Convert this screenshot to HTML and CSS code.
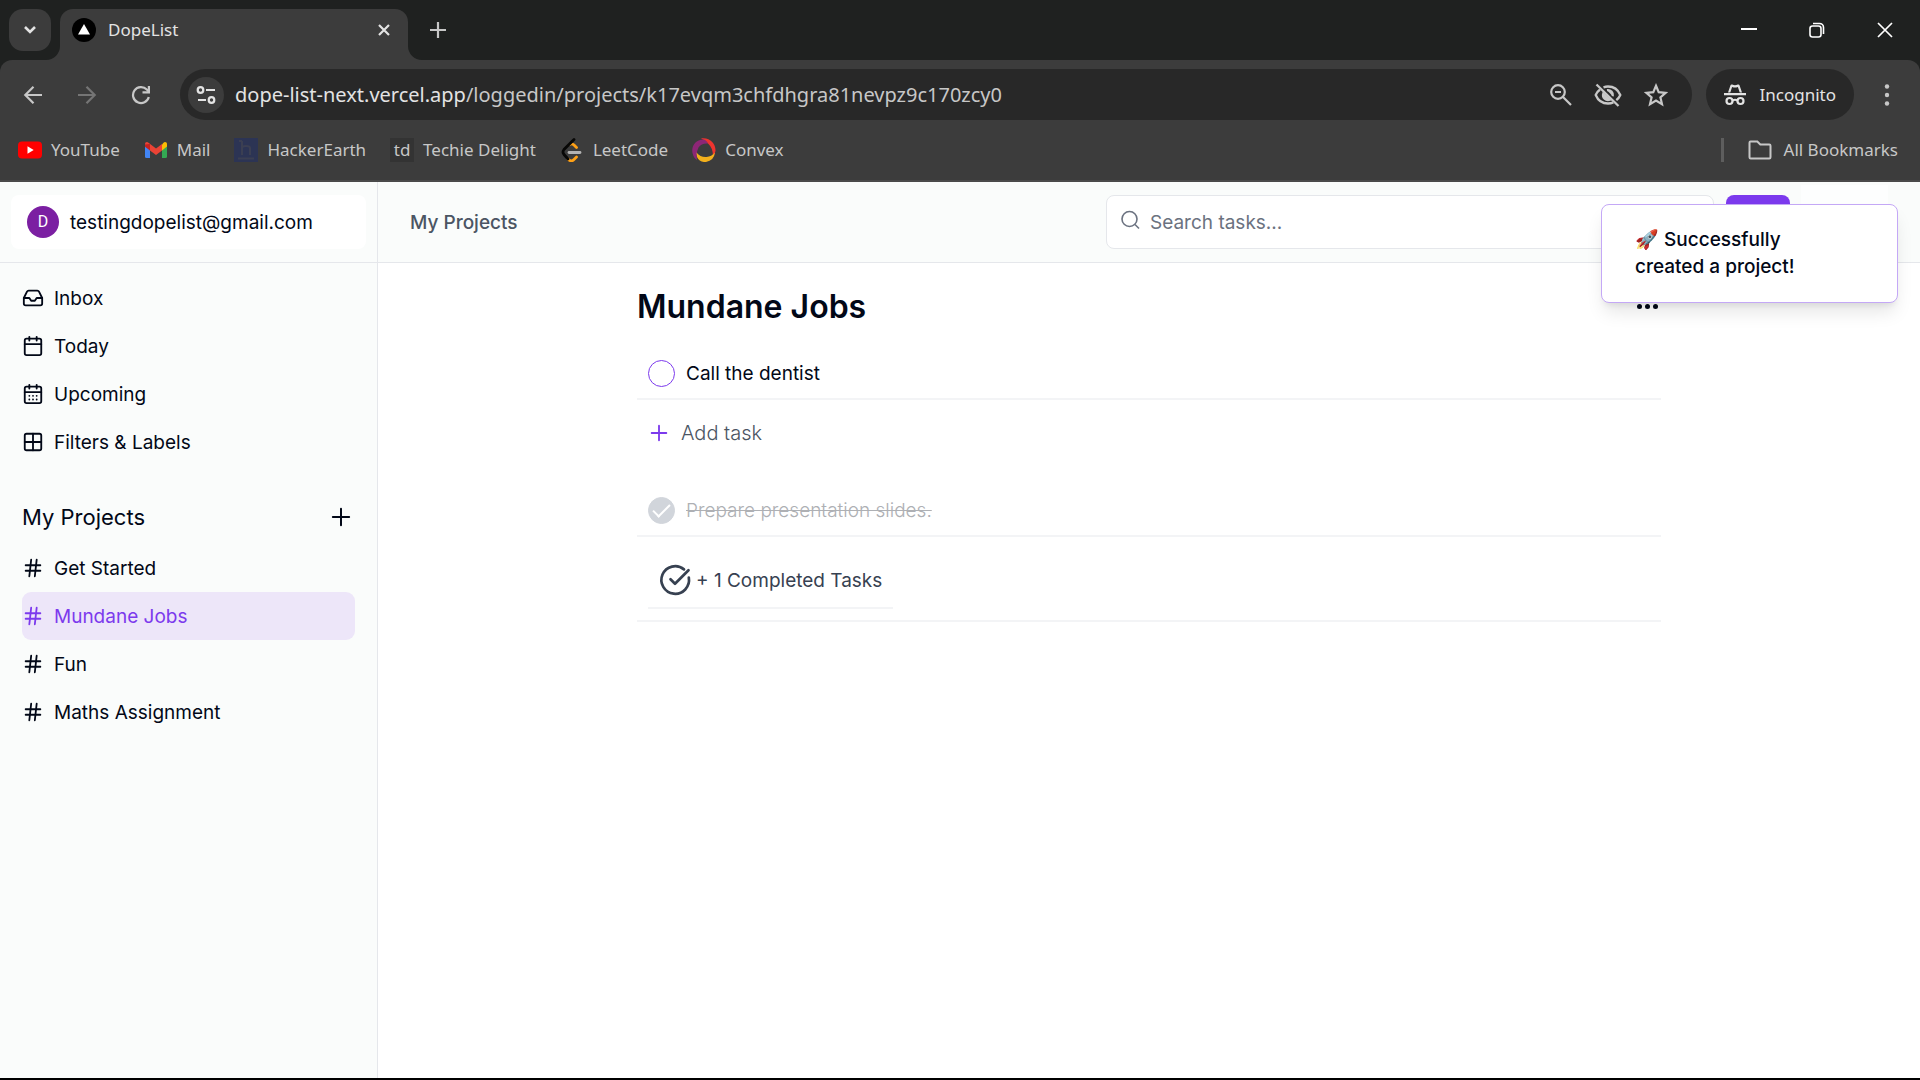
FILE: index.html
```html
<!DOCTYPE html>
<html lang="en">
<head>
<meta charset="utf-8">
<title>DopeList</title>
<link rel="stylesheet" href="styles.css">
</head>
<body>
<header class="browser">
  <div class="tabstrip">
    <button class="tab-search" aria-label="Search tabs"><svg width="14" height="10" viewBox="0 0 14 10"><path d="M2 2l5 5 5-5" fill="none" stroke="#e3e3e3" stroke-width="2.6"/></svg></button>
    <div class="tab">
      <svg class="flare" width="14" height="14" viewBox="0 0 14 14"><path d="M14 0v14H0A14 14 0 0 0 14 0z" fill="#3c3c3c"/></svg>
      <svg width="24" height="24" viewBox="0 0 24 24"><circle cx="12" cy="12" r="12" fill="#000"/><path d="M12 6l6 10.500H6z" fill="#fff"/></svg>
      <span class="tab-title">DopeList</span>
      <button class="plain" aria-label="Close tab"><svg width="14" height="14" viewBox="0 0 14 14"><path d="M2 2l10 10M12 2L2 12" stroke="#e3e3e3" stroke-width="2.200"/></svg></button>
      <svg class="flare flare-right" width="14" height="14" viewBox="0 0 14 14"><path d="M0 0v14h14A14 14 0 0 1 0 0z" fill="#3c3c3c"/></svg>
    </div>
    <button class="plain new-tab" aria-label="New tab"><svg width="16" height="16" viewBox="0 0 16 16"><path d="M8 0v16M0 8h16" stroke="#c7c7c7" stroke-width="2.200"/></svg></button>
    <div class="window-controls">
      <button class="plain" aria-label="Minimize"><svg width="16" height="16" viewBox="0 0 16 16"><path d="M0 7h16" stroke="#fff" stroke-width="2"/></svg></button>
      <button class="plain" aria-label="Restore"><svg width="16" height="16" viewBox="0 0 16 16" fill="none" stroke="#fff" stroke-width="1.600"><rect x="1" y="4" width="11" height="11" rx="2.500"/><path d="M4 1.500h6.500a4 4 0 0 1 4 4V12"/></svg></button>
      <button class="plain" aria-label="Close"><svg width="16" height="16" viewBox="0 0 16 16"><path d="M1 1l14 14M15 1L1 15" stroke="#fff" stroke-width="1.700"/></svg></button>
    </div>
  </div>
  <div class="toolbar">
    <button class="plain" aria-label="Back"><svg width="20" height="20" viewBox="0 0 20 20"><path d="M19 10H2.500M10.500 1.800L2.300 10l8.200 8.200" fill="none" stroke="#c7c7c7" stroke-width="2.200"/></svg></button>
    <button class="plain" aria-label="Forward"><svg width="20" height="20" viewBox="0 0 20 20"><path d="M1 10h16.500M9.500 1.800l8.200 8.200-8.200 8.200" fill="none" stroke="#757575" stroke-width="2.200"/></svg></button>
    <button class="plain" aria-label="Reload"><svg width="20" height="20" viewBox="0 0 20 20"><path d="M17.800 12A8 8 0 1 1 15.800 4.500L18 6.700" fill="none" stroke="#c7c7c7" stroke-width="2.200"/><path d="M19 1v7.500h-7.500v-2.200h5.300V1z" fill="#c7c7c7"/></svg></button>
    <div class="omnibox">
      <button class="site-info" aria-label="Site information"><svg width="20" height="20" viewBox="0 0 20 20" fill="none" stroke="#e3e3e3" stroke-width="2.200"><circle cx="4.500" cy="5" r="2.800"/><path d="M10 5h9M2 15h8"/><circle cx="15.500" cy="15" r="2.800"/></svg></button>
      <span class="url">dope-list-next.vercel.app<span class="path">/loggedin/projects/k17evqm3chfdhgra81nevpz9c170zcy0</span></span>
      <button class="plain" aria-label="Zoom"><svg width="22" height="22" viewBox="0 0 22 22" fill="none" stroke="#c7c7c7" stroke-width="2.200"><circle cx="8" cy="8" r="6.800"/><path d="M13 13l8 8M5 8h6"/></svg></button>
      <button class="plain" aria-label="Third-party cookies blocked"><svg width="28" height="24" viewBox="0 0 28 24" fill="none" stroke="#c7c7c7" stroke-width="2.300"><path d="M9.500 4.300A13 13 0 0 1 14 3.500C19.600 3.500 24 6.500 26.300 12a13 13 0 0 1-4 5.200M6 6.500A13 13 0 0 0 1.700 12C4 17.500 8.400 20.500 14 20.500c2 0 3.800-.4 5.400-1.100"/><path d="M13 7.200a5 5 0 0 1 5.800 6M9.300 10.500a5 5 0 0 0 6.500 6.200z" fill="#c7c7c7"/><path d="M2.500 1.500L24.500 23"/></svg></button>
      <button class="plain" aria-label="Bookmark this tab"><svg width="24" height="24" viewBox="0 0 24 24"><path d="M12 2.800l2.700 6.400 6.900.6-5.200 4.500 1.600 6.800-6-3.600-6 3.600 1.600-6.800-5.200-4.500 6.900-.6z" fill="none" stroke="#c7c7c7" stroke-width="2.200"/></svg></button>
    </div>
    <button class="incognito"><svg width="22" height="22" viewBox="0 0 22 22"><path d="M0 9h22v2.300H0zM4 8.500L6.500 1.200Q7 0 8.300.6 11 1.800 13.700.6 15 0 15.500 1.200L18 8.500h-2.300L13.900 3Q11 4 8.100 3L6.300 8.500z" fill="#e3e3e3"/><g fill="none" stroke="#e3e3e3" stroke-width="2.200"><circle cx="5.500" cy="17" r="3"/><circle cx="16.500" cy="17" r="3"/><path d="M8.500 16.500q2.500-1.500 5 0"/></g></svg>Incognito</button>
    <button class="plain" aria-label="Menu"><svg width="6" height="22" viewBox="0 0 6 22" fill="#c7c7c7"><circle cx="3" cy="2.500" r="2.200"/><circle cx="3" cy="11" r="2.200"/><circle cx="3" cy="19.500" r="2.200"/></svg></button>
  </div>
  <nav class="bookmarks" aria-label="Bookmarks">
    <a href="#"><svg width="24" height="24" viewBox="0 0 24 24"><rect y="3.500" width="24" height="17" rx="4" fill="#f00"/><path d="M9.500 8.200v7.600l6.200-3.800z" fill="#fff"/></svg>YouTube</a>
    <a href="#"><svg width="24" height="24" viewBox="0 0 24 24"><path d="M1 6v12.500q0 1.500 1.500 1.500H6V9z" fill="#4285f4"/><path d="M23 6v12.500q0 1.500-1.500 1.500H18V9z" fill="#34a853"/><path d="M18 6.500l1.500-1.700C21 3.400 23 4.300 23 6.300V8.500l-5 4z" fill="#fbbc04"/><path d="M1 6.300c0-2 2-2.900 3.500-1.500L12 10.500l6-4.500v6.500l-6 4.500-6-4.500z" fill="#ea4335"/><path d="M1 6.500V8.700l5 3.800V6z" fill="#c5221f"/></svg>Mail</a>
    <a href="#"><svg width="24" height="24" viewBox="0 0 24 24"><rect width="24" height="24" fill="#2c3454"/><path d="M8 3v14M8 10q0-2 4-2t4 2v7M4 20.500h16M5 3h3" fill="none" stroke="#3b3f52" stroke-width="2"/></svg>HackerEarth</a>
    <a href="#"><span class="td-logo" aria-hidden="true">td</span>Techie Delight</a>
    <a href="#"><svg width="24" height="24" viewBox="0 0 24 24" fill="none" stroke-width="2.800" stroke-linecap="round"><path d="M10 6.500q2-1.500 4 .5l2.500 2.500M8 21q3 3.500 6 .5l2.500-2.500" stroke="#ffa116"/><path d="M14 1.500L4 11.500q-2 2.500 0 5l4 4.500" stroke="#070706"/><path d="M9 14.500h11" stroke="#b3b3b3"/></svg>LeetCode</a>
    <a href="#"><svg width="24" height="24" viewBox="0 0 24 24"><path d="M9 .5C18 -1 24 6 23.500 13q-.5 3-2.500 5 0-8-5-12.500Q13 2 9 .5z" fill="#ee342f"/><path d="M12 1.500C4 1 -1 8 .5 15q1 5 4.500 7-1-8 1.500-12.500Q9.500 5 16 5.500 14.500 2.500 12 1.500z" fill="#8d2676"/><path d="M4.500 14.500q4 5 10 4.500 5-.5 8.500-4.500-1 8-9 9.500-6.500.5-9-5z" fill="#f3b01c"/></svg>Convex</a>
    <a href="#" class="all-bookmarks"><svg width="24" height="24" viewBox="0 0 24 24"><path d="M2.500 3.500h6.800l3 3h9q1.200 0 1.200 1.200v11.600q0 1.200-1.200 1.200H2.700q-1.200 0-1.200-1.200V4.700q0-1.200 1-1.200z" fill="none" stroke="#c7c7c7" stroke-width="2"/></svg>All Bookmarks</a>
  </nav>
</header>

<div class="app">
  <aside class="sidebar">
    <div class="account">
      <a href="#" class="profile"><span class="avatar">D</span>testingdopelist@gmail.com</a>
    </div>
    <nav class="menu" aria-label="Tasks">
      <a href="#"><svg class="ico" viewBox="0 0 24 24"><path d="M22 12h-6l-2 3h-4l-2-3H2"/><path d="M5.450 5.110L2 12v6a2 2 0 0 0 2 2h16a2 2 0 0 0 2-2v-6l-3.450-6.890A2 2 0 0 0 16.760 4H7.240a2 2 0 0 0-1.790 1.110z"/></svg>Inbox</a>
      <a href="#"><svg class="ico" viewBox="0 0 24 24"><path d="M8 2v4M16 2v4M3 10h18"/><rect x="3" y="4" width="18" height="18" rx="2"/></svg>Today</a>
      <a href="#"><svg class="ico" viewBox="0 0 24 24"><path d="M8 2v4M16 2v4M3 10h18M8 14h.01M12 14h.01M16 14h.01M8 18h.01M12 18h.01M16 18h.01"/><rect x="3" y="4" width="18" height="18" rx="2"/></svg>Upcoming</a>
      <a href="#"><svg class="ico" viewBox="0 0 24 24"><path d="M12 3v18M3 12h18"/><rect x="3" y="3" width="18" height="18" rx="2"/></svg>Filters &amp; Labels</a>
    </nav>
    <div class="projects-head">
      <h2>My Projects</h2>
      <button class="plain" aria-label="Add project"><svg class="ico ico-add" viewBox="0 0 24 24"><path d="M5 12h14M12 5v14"/></svg></button>
    </div>
    <nav class="menu" aria-label="My projects">
      <a href="#"><svg class="ico" viewBox="0 0 24 24"><path d="M4 9h16M4 15h16M10 3L8 21M16 3l-2 18"/></svg>Get Started</a>
      <a href="#" class="active" aria-current="page"><svg class="ico" viewBox="0 0 24 24"><path d="M4 9h16M4 15h16M10 3L8 21M16 3l-2 18"/></svg>Mundane Jobs</a>
      <a href="#"><svg class="ico" viewBox="0 0 24 24"><path d="M4 9h16M4 15h16M10 3L8 21M16 3l-2 18"/></svg>Fun</a>
      <a href="#"><svg class="ico" viewBox="0 0 24 24"><path d="M4 9h16M4 15h16M10 3L8 21M16 3l-2 18"/></svg>Maths Assignment</a>
    </nav>
  </aside>

  <div class="content">
    <div class="topbar">
      <a href="#" class="crumb">My Projects</a>
      <label class="search">
        <svg width="20" height="24" viewBox="0 0 20 24" fill="none" stroke="#6b7280" stroke-width="1.600"><circle cx="8.500" cy="9" r="7.500"/><path d="M14 14.500L18 18.500"/></svg>
        <input type="search" placeholder="Search tasks..." aria-label="Search tasks">
      </label>
      <button class="ai-button" aria-label="Search"></button>
      <button class="user-button" aria-label="Account"></button>
    </div>
    <main class="project">
      <div class="project-head">
        <h1>Mundane Jobs</h1>
        <button class="plain" aria-label="Project options"><svg width="27" height="27" viewBox="0 0 27 27" fill="#020817"><circle cx="5.500" cy="12.500" r="2.500"/><circle cx="13.500" cy="12.500" r="2.500"/><circle cx="21.500" cy="12.500" r="2.500"/></svg></button>
      </div>
      <label class="task"><input type="checkbox">Call the dentist</label>
      <button class="add-task"><svg width="22" height="22" viewBox="0 0 24 24"><path d="M4 12h16M12 4v16" stroke="#7c3aed" stroke-width="2" stroke-linecap="round"/></svg>Add task</button>
      <label class="task done"><input type="checkbox" checked><s>Prepare presentation slides.</s></label>
      <div class="completed">
        <button><svg width="36" height="36" viewBox="0 0 24 24" fill="none" stroke="#374151" stroke-width="1.800" stroke-linecap="round" stroke-linejoin="round"><path d="M18 4.900a9.200 9.200 0 1 0 3.200 5.500"/><path d="M9 11.500l3 3L21 5.500"/></svg>+ 1 Completed Tasks</button>
      </div>
    </main>
  </div>
  <div class="toast" role="status">🚀 Successfully<br>created a project!</div>
</div>
</body>
</html>
```
FILE: styles.css
```css
* {
  box-sizing: border-box;
}

body {
  margin: 0;
  min-height: 100vh;
  display: flex;
  flex-direction: column;
  border-bottom: 2px solid #000;
  background: #fff;
  color: #020817;
  font: 19px/27px Inter, "Liberation Sans", sans-serif;
}

a {
  color: inherit;
  text-decoration: none;
}

button {
  padding: 0;
  border: 0;
  background: none;
  color: inherit;
  font: inherit;
  display: flex;
  align-items: center;
  justify-content: center;
}

svg {
  display: block;
  flex: none;
}

/* Browser window */
.browser {
  background: #1f2120;
  color: #c7c7c7;
  font: 17px/24px "Noto Sans", "Open Sans", sans-serif;
  border-bottom: 2px solid #4a4a4a;
}

.tabstrip {
  height: 60px;
  display: flex;
  align-items: center;
  padding: 0 27px 0 9px;
}

.tab-search {
  width: 42px;
  height: 42px;
  border-radius: 14px;
  background: #3c3c3c;
}

.tab {
  position: relative;
  align-self: flex-end;
  width: 348px;
  height: 51px;
  margin-left: 9px;
  padding: 0 17px 9px 12px;
  display: flex;
  align-items: center;
  gap: 12px;
  border-radius: 13px 13px 0 0;
  background: #3c3c3c;
  color: #e3e3e3;
}

.tab-title {
  flex: 1;
}

.flare {
  position: absolute;
  left: -14px;
  bottom: 0;
}

.flare-right {
  left: auto;
  right: -14px;
}

.new-tab {
  margin-left: 22px;
}

.window-controls {
  margin-left: auto;
  display: flex;
  gap: 52px;
}

.toolbar {
  height: 69px;
  display: flex;
  align-items: center;
  gap: 34px;
  padding: 0 30px 0 23px;
  border-radius: 12px 12px 0 0;
  background: #3c3c3c;
}

.omnibox {
  flex: 1;
  height: 51px;
  margin: 0 -20px 0 -5px;
  padding: 0 24px 0 8px;
  display: flex;
  align-items: center;
  gap: 22px;
  border-radius: 26px;
  background: #282828;
}

.site-info {
  width: 36px;
  height: 36px;
  margin-right: -11px;
  border-radius: 50%;
  background: #3c3c3c;
}

.url {
  flex: 1;
  font-size: 20px;
  color: #e3e3e3;
}

.path {
  color: #c7c7c7;
}

.incognito {
  height: 51px;
  margin-right: -4px;
  padding: 0 18px;
  gap: 14px;
  border-radius: 26px;
  background: #282828;
  color: #e3e3e3;
}

.bookmarks {
  height: 51px;
  padding: 0 22px 9px 18px;
  display: flex;
  align-items: center;
  gap: 24px;
  background: #3c3c3c;
}

.bookmarks a {
  display: flex;
  align-items: center;
  gap: 9px;
}

.bookmarks .all-bookmarks {
  height: 24px;
  margin-left: auto;
  padding-left: 24px;
  gap: 12px;
  border-left: 3px solid #5e5e5e;
}

.td-logo {
  width: 24px;
  height: 24px;
  background: #333;
  color: #c7c7c7;
  text-align: center;
}

/* Application */
.app {
  position: relative;
  flex: 1;
  display: flex;
}

.sidebar {
  width: 378px;
  flex: none;
  border-right: 1px solid #e5e7eb;
  background: #fafcfb;
}

.account {
  height: 81px;
  padding: 13px 11px;
  border-bottom: 1px solid #e5e7eb;
}

.profile {
  height: 54px;
  padding: 0 16px;
  display: flex;
  align-items: center;
  gap: 11px;
  border-radius: 8px;
  background: #fff;
}

.avatar {
  width: 32px;
  height: 32px;
  border-radius: 50%;
  background: #7b1fa2;
  color: #fff;
  font: 16px/32px Roboto, sans-serif;
  text-align: center;
}

.menu {
  padding: 11px 22px;
}

.menu a {
  height: 48px;
  display: flex;
  align-items: center;
  gap: 10px;
  border-radius: 9px;
}

.menu .active {
  background: #ede6f9;
  color: #7c3aed;
}

.ico {
  width: 22px;
  height: 22px;
  fill: none;
  stroke: currentColor;
  stroke-width: 2;
  stroke-linecap: round;
  stroke-linejoin: round;
}

.ico-add {
  width: 28px;
  height: 28px;
  stroke-width: 1.7;
}

.projects-head {
  display: flex;
  align-items: center;
  justify-content: space-between;
  padding: 26px 22px 2px;
}

h2 {
  margin: 0;
  font-size: 22px;
  font-weight: 400;
  line-height: 28px;
}

.content {
  flex: 1;
}

.topbar {
  height: 81px;
  padding: 0 32px;
  display: flex;
  align-items: center;
  border-bottom: 1px solid #e5e7eb;
  background: #fafcfb;
}

.crumb {
  color: #4b5563;
  font-weight: 500;
}

.search {
  width: 608px;
  height: 54px;
  margin-left: auto;
  padding-left: 14px;
  display: flex;
  align-items: center;
  gap: 9px;
  border: 1px solid #e5e7eb;
  border-radius: 8px;
  background: #fff;
}

.search input {
  flex: 1;
  padding: 0;
  border: 0;
  outline: 0;
  background: none;
  font: inherit;
}

.search input::placeholder {
  color: #6b7280;
}

.ai-button {
  width: 64px;
  height: 54px;
  margin: 0 11px 0 12px;
  border-radius: 8px;
  background: #7c3aed;
}

.user-button {
  width: 87px;
  height: 74px;
  background: #fdfefe;
}

.project {
  max-width: 1024px;
  margin: 0 auto;
  padding-top: 22px;
}

.project-head {
  display: flex;
  align-items: center;
  justify-content: space-between;
}

h1 {
  margin: 0;
  font-size: 32px;
  line-height: 44px;
  font-weight: 600;
}

.task {
  height: 52px;
  margin-top: 19px;
  padding: 0 11px;
  display: flex;
  align-items: center;
  gap: 11px;
  border-bottom: 2px solid #f3f4f6;
}

.task input {
  appearance: none;
  width: 27px;
  height: 27px;
  margin: 0;
  display: grid;
  place-items: center;
  border: 1px solid #7c3aed;
  border-radius: 50%;
}

.task input:checked {
  border-color: #d1d5db;
  background: #d1d5db;
}

.task input:checked::after {
  content: "";
  width: 15px;
  height: 7px;
  border: solid #fff;
  border-width: 0 0 2px 2px;
  transform: translateY(-2px) rotate(-45deg);
}

.add-task {
  margin-top: 19px;
  padding-left: 11px;
  gap: 11px;
  color: #4b5563;
  font-size: 20px;
  font-weight: 300;
  line-height: 28px;
}

.done {
  margin-top: 38px;
  color: #aeb0b4;
  font-weight: 300;
}

.completed {
  padding: 11px;
  border-bottom: 2px solid #f3f4f6;
}

.completed button {
  height: 61px;
  padding: 5px 11px 0 9px;
  gap: 3px;
  border-bottom: 2px solid #f3f4f6;
  color: #374151;
}

.toast {
  position: absolute;
  top: 22px;
  right: 22px;
  width: 297px;
  height: 99px;
  padding: 21px 33px;
  border: 1px solid #c4a8f6;
  border-radius: 8px;
  background: #fff;
  font-weight: 500;
  box-shadow: 0 12px 18px -3px rgba(0, 0, 0, .1), 0 5px 7px -4px rgba(0, 0, 0, .1);
}
```
